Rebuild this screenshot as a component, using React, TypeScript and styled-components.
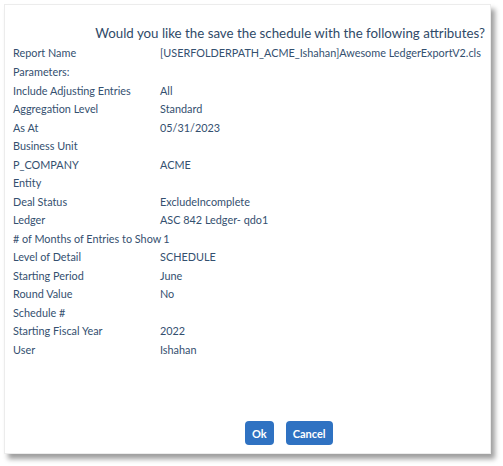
import React from 'react';
import styled, { createGlobalStyle } from 'styled-components';

const GlobalStyle = createGlobalStyle`
  html, body {
    margin: 0;
    padding: 0;
    background: #ffffff;
  }
  body {
    font-family: Lato, "Open Sans", Arial, sans-serif;
  }
`;

const Page = styled.div`
  width: 503px;
  height: 466px;
  padding: 4px 0 0 4px;
  box-sizing: border-box;
`;

const Dialog = styled.div`
  width: 487px;
  height: 450px;
  box-sizing: border-box;
  background: #ffffff;
  border: 1px solid #ececec;
  box-shadow: 4px 5px 5px rgba(0, 0, 0, 0.38);
  display: flex;
  flex-direction: column;
  padding: 19px 5px 8px 8px;
  color: #34506f;
`;

const Title = styled.div`
  text-align: right;
  font-size: 13.3px;
  line-height: 19px;
  color: #2f4a68;
  white-space: nowrap;
`;

const List = styled.div`
  display: flex;
  flex-direction: column;
  font-size: 10.85px;
`;

const Row = styled.div<{ first?: boolean }>`
  display: flex;
  height: ${props => (props.first ? '20px' : '18.5px')};
  line-height: ${props => (props.first ? '20px' : '18.5px')};
  white-space: nowrap;
`;

const Label = styled.div`
  flex-shrink: 0;
  min-width: 145px;
  margin-right: 2px;
`;

const Value = styled.div``;

const Footer = styled.div`
  margin-top: auto;
  display: flex;
  gap: 12px;
  padding-left: 232px;
`;

const Button = styled.button`
  height: 24px;
  padding: 0 7px;
  border: none;
  border-radius: 4px;
  background: #2f72c2;
  color: #ffffff;
  font-family: Lato, Arial, sans-serif;
  font-weight: bold;
  font-size: 11px;
  cursor: pointer;
`;

const rows: [string, string][] = [
  ['Report Name', '[USERFOLDERPATH_ACME_Ishahan]Awesome LedgerExportV2.cls'],
  ['Parameters:', ''],
  ['Include Adjusting Entries', 'All'],
  ['Aggregation Level', 'Standard'],
  ['As At', '05/31/2023'],
  ['Business Unit', ''],
  ['P_COMPANY', 'ACME'],
  ['Entity', ''],
  ['Deal Status', 'ExcludeIncomplete'],
  ['Ledger', 'ASC 842 Ledger- qdo1'],
  ['# of Months of Entries to Show', '1'],
  ['Level of Detail', 'SCHEDULE'],
  ['Starting Period', 'June'],
  ['Round Value', 'No'],
  ['Schedule #', ''],
  ['Starting Fiscal Year', '2022'],
  ['User', 'Ishahan'],
];

export default function App() {
  return (
    <>
      <GlobalStyle />
      <Page>
        <Dialog>
          <Title>Would you like the save the schedule with the following attributes?</Title>
          <List>
            {rows.map(([label, value], i) => (
              <Row key={label} first={i === 0}>
                <Label>{label}</Label>
                <Value>{value}</Value>
              </Row>
            ))}
          </List>
          <Footer>
            <Button>Ok</Button>
            <Button>Cancel</Button>
          </Footer>
        </Dialog>
      </Page>
    </>
  );
}
